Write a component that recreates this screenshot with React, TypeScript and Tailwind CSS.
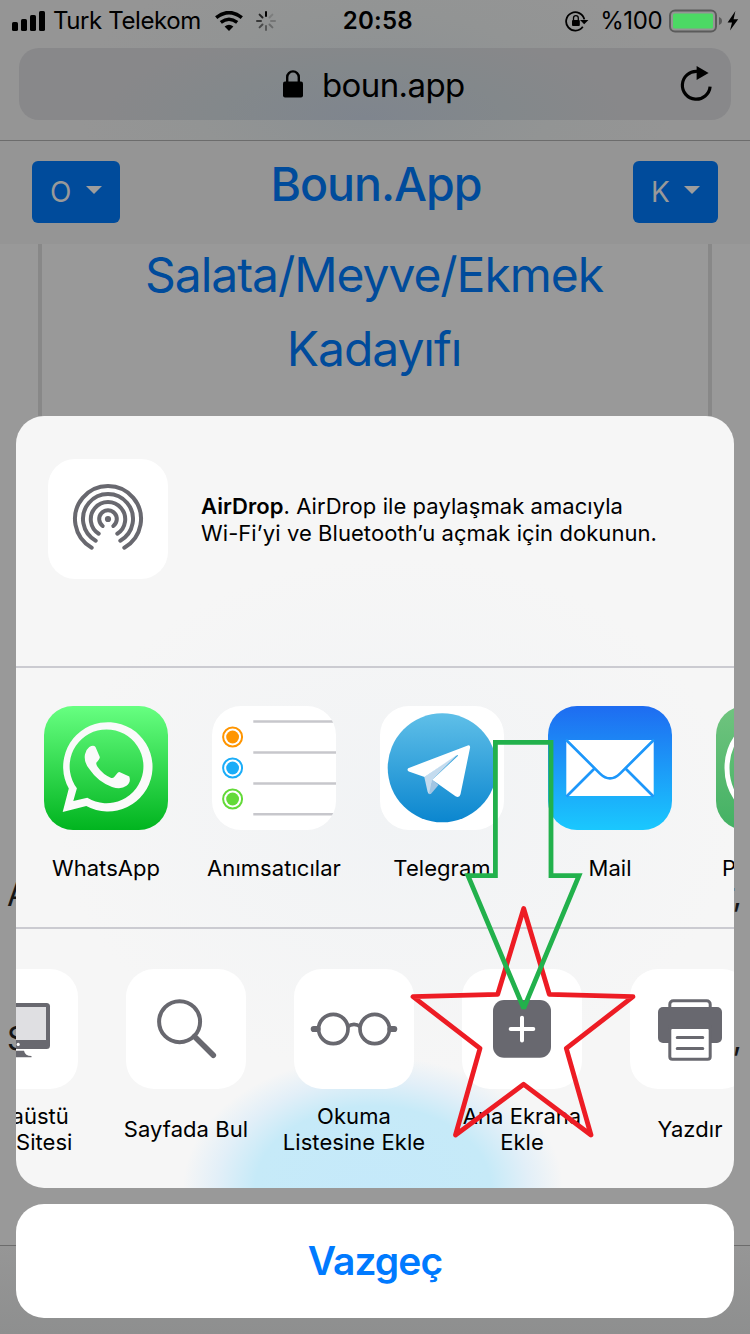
import type { ReactNode } from 'react';

const ink = '#68686f';

function StatusBar() {
  return (
    <div className="flex h-[41px] items-center pl-3 pr-[9px] text-black">
      <svg width="33" height="20" className="shrink-0">
        <rect x="0" y="11" width="6" height="9" rx="1.6" />
        <rect x="9" y="8" width="6" height="12" rx="1.6" />
        <rect x="18" y="4" width="6" height="16" rx="1.6" />
        <rect x="27" y="0" width="6" height="20" rx="1.6" />
      </svg>
      <span className="ml-[8px] w-[162px] whitespace-nowrap text-[24px] leading-[30px] tracking-[-0.4px]">Turk Telekom</span>
      <svg width="28" height="20" viewBox="0 0 28 20" className="shrink-0">
        <path d="M1.2 6.6Q14-3.4 26.8 6.6" fill="none" stroke="#000" strokeWidth="3.6" />
        <path d="M5.8 11.4Q14 5 22.2 11.4" fill="none" stroke="#000" strokeWidth="3.4" />
        <path d="M9.6 15.6Q14 12 18.4 15.6L14 20Z" />
      </svg>
      <svg width="20" height="20" viewBox="-10 -10 20 20" className="ml-[13px] shrink-0" stroke="#000" strokeWidth="2" strokeLinecap="round">
        <path d="M0-5V-9" />
        <path d="M3.5-3.5L6.4-6.4" opacity=".15" />
        <path d="M5 0H9" opacity=".2" />
        <path d="M3.5 3.5L6.4 6.4" opacity=".28" />
        <path d="M0 5V9" opacity=".4" />
        <path d="M-3.5 3.5L-6.4 6.4" opacity=".5" />
        <path d="M-5 0H-9" opacity=".62" />
        <path d="M-3.5-3.5L-6.4-6.4" opacity=".75" />
      </svg>
      <span className="ml-[67px] w-[223px] whitespace-nowrap text-[24px] font-semibold leading-[30px] tracking-[0.3px]">20:58</span>
      <svg width="24" height="22" viewBox="0 0 24 22" className="shrink-0">
        <path d="M17.8 16.8A9.2 9.2 0 1 1 19.3 9.4" fill="none" stroke="#000" strokeWidth="1.8" />
        <path d="M15 10H23.4L19.2 14.2Z" />
        <rect x="7" y="10" width="7.8" height="6" rx="1" />
        <path d="M8.5 10V8a2.4 2.4 0 0 1 4.8 0V10" fill="none" stroke="#000" strokeWidth="1.3" />
      </svg>
      <span className="ml-[11px] w-[69px] whitespace-nowrap text-[24px] leading-[30px] tracking-[-0.4px]">%100</span>
      <svg width="72" height="24" viewBox="0 0 72 24" className="shrink-0">
        <rect x="1" y="1.6" width="46" height="21" rx="5" fill="none" stroke="#5b5b5b" strokeWidth="2" />
        <rect x="4" y="4.6" width="40" height="15" rx="1.5" fill="#4cd964" />
        <path d="M50 8q3 1.2 3 4t-3 4z" fill="#5b5b5b" />
        <path d="M66.4 2L58.6 13.4H63L61 21.6L69.2 10.2H64.6Z" />
      </svg>
    </div>
  );
}

function AddressBar() {
  return (
    <div className="mx-[19px] mt-[7px] flex h-[72px] items-center rounded-[20px] bg-[#88888a] bg-[radial-gradient(ellipse_260px_90px_at_345px_70px,#7f858e,#83888b_55%,transparent)] text-black">
      <svg width="20" height="28" viewBox="0 0 20 28" className="ml-[264px]">
        <rect y="11.5" width="20" height="16" rx="2" />
        <path d="M4.2 12V7.2a5.8 5.8 0 0 1 11.6 0V12" fill="none" stroke="#000" strokeWidth="2.4" />
      </svg>
      <span className="ml-[19px] mt-px w-[358px] text-[33px] leading-[40px] tracking-[-0.6px]">boun.app</span>
      <svg width="34" height="38" viewBox="0 0 34 38" className="shrink-0">
        <path d="M17 6.4A13.9 13.9 0 1 0 30.1 21.6" fill="none" stroke="#000" strokeWidth="3.2" />
        <path d="M16.6 1L28.6 8L16.6 15Z" />
      </svg>
    </div>
  );
}

function MenuButton({ label, className }: { label: string; className: string }) {
  return (
    <div className={`flex h-[62px] items-center justify-between rounded-[6px] bg-[#004b9b] pl-[18px] pr-[18px] text-[28px] text-[#999] ${className}`}>
      <span>{label}</span>
      <svg width="16" height="8" className="mb-1">
        <path d="M0 0H16L8 8Z" fill="#9d9d9d" />
      </svg>
    </div>
  );
}

function Safari() {
  return (
    <div className="flex h-[1334px] flex-col bg-[#999]">
      <header className="h-[141px] shrink-0 border-b border-[#6c6c6c] bg-[#959595] bg-[radial-gradient(ellipse_300px_150px_at_375px_100px,#8b9093,#929494_60%,transparent)]">
        <StatusBar />
        <AddressBar />
      </header>
      <nav className="flex h-[103px] shrink-0 items-start justify-between bg-[#959595] px-8 pt-5">
        <MenuButton label="O" className="w-[88px]" />
        <h1 className="mr-[1px] mt-[-6px] text-[46.5px] font-medium leading-[58px] tracking-[-1px] text-[#004b9b]">Boun.App</h1>
        <MenuButton label="K" className="w-[85px]" />
      </nav>
      <section className="mx-[38px] h-[560px] shrink-0 border-x-4 border-[#888] pr-[2px] text-center text-[48px] leading-[74px] tracking-[-1.05px] text-[#004b9b]">
        <p className="mt-[-6px]">Salata/Meyve/Ekmek</p>
        <p>Kadayıfı</p>
      </section>
      <div className="h-[441px] shrink-0 pl-[7px] pr-2 pt-[71px] text-[32px] leading-[40px] text-[#151515]">
        <p className="flex justify-between"><span>A</span><span>r,</span></p>
        <p className="mt-[104px] flex justify-between"><span>S</span><span>,</span></p>
      </div>
      <footer className="h-[89px] shrink-0 border-t border-[#6c6c6c] bg-gradient-to-b from-[#969696] to-[#8e8f8f]" />
    </div>
  );
}

function AirDropIcon() {
  return (
    <svg viewBox="0 0 120 120" className="size-[120px] shrink-0 rounded-[27px] bg-white" fill="none" stroke={ink} strokeWidth="4" strokeLinecap="round">
      <circle cx="60" cy="60" r="3.1" fill={ink} stroke="none" />
      <path d="M54.7 67A8.8 8.8 0 1 1 65.3 67" />
      <path d="M50.7 74.7A17.2 17.2 0 1 1 69.3 74.7" />
      <path d="M47.7 81.7A25 25 0 1 1 72.3 81.7" />
      <path d="M43.7 88.7A33 33 0 1 1 76.3 88.7" />
    </svg>
  );
}

function WhatsAppIcon() {
  return (
    <svg viewBox="0 0 124 124">
      <defs>
        <linearGradient id="wa" x2="0" y2="1">
          <stop stopColor="#67ff81" />
          <stop offset="1" stopColor="#01b41f" />
        </linearGradient>
      </defs>
      <path fill="url(#wa)" d="M0 0H124V124H0Z" />
      <path fill="#fafafa" fillRule="evenodd" d="M18.7 106L24.8 82.6A44.7 44.7 0 1 1 42.3 100ZM29.3 95L43.3 91.8A36.9 36.9 0 1 0 32.9 82.3Z" />
      <path fill="#fafafa" d="M45.3 41Q49.5 38.6 51.5 41L55.8 51Q56 52.5 52.3 56.8Q52 58.5 53.5 60.8Q59 68.8 67.2 71.9Q69 72.3 70 71.2L73.5 67Q75 65.5 76.5 66.4L85.3 70.6Q87.2 76.5 82.5 79.7Q77 84 68 80.9Q54 76 45.5 63.3Q39.5 56 41 48.3Q42 43.5 45.3 41Z" />
    </svg>
  );
}

function RemindersIcon() {
  return (
    <svg viewBox="0 0 124 124">
      <path fill="#fff" d="M0 0H124V124H0Z" />
      <path d="M41.3 15.5H121M41.3 46.4H124M41.3 77.4H124M41.3 108.3H121" stroke="#c7c7cc" strokeWidth="2.5" />
      {[['#ff9500', 31], ['#1badf8', 62], ['#63da38', 93]].map(([c, y]) => (
        <g key={c}>
          <circle cx="20.6" cy={y} r="9.5" fill="none" stroke={c as string} strokeWidth="2" />
          <circle cx="20.6" cy={y} r="6.4" fill={c as string} />
        </g>
      ))}
    </svg>
  );
}

function TelegramIcon() {
  return (
    <svg viewBox="0 0 124 124">
      <defs>
        <linearGradient id="tg" x2="0" y2="1">
          <stop stopColor="#5fbfe8" />
          <stop offset="1" stopColor="#0b86cf" />
        </linearGradient>
      </defs>
      <path fill="#fff" d="M0 0H124V124H0Z" />
      <circle cx="62.2" cy="61.8" r="54.5" fill="url(#tg)" />
      <path fill="#c4dbee" d="M44.3 71L80 46L52.5 73.5L50 88.2Q48 88 47.5 85.5Z" />
      <path fill="#a2c5e3" d="M52.3 73.5L58.5 79L51.5 87.2Q50 88.8 49 87.6Z" />
      <path fill="#fff" fillRule="evenodd" d="M28.2 62.2L87.8 39.4Q90.6 38.7 90 42L80.5 88.3Q79.5 92.2 75.5 90.3L52.2 73.7L77.8 50Q78.6 48.3 76 49.6L44.5 71L28.8 65.6Q26.6 64 28.2 62.2Z" />
    </svg>
  );
}

function MailIcon() {
  return (
    <svg viewBox="0 0 124 124">
      <defs>
        <linearGradient id="ml" x2="0" y2="1">
          <stop stopColor="#1e6cf1" />
          <stop offset="1" stopColor="#1ac8fe" />
        </linearGradient>
      </defs>
      <path fill="url(#ml)" d="M0 0H124V124H0Z" />
      <rect x="18.3" y="34" width="87.4" height="56" rx="1.5" fill="#fff" />
      <path d="M18 33.8L52 67.6Q57 72.4 62 72.4T72 67.6L106 33.8M18.5 90.5L46 63M105.5 90.5L78 63" fill="none" stroke="#1d97fa" strokeWidth="2.7" />
    </svg>
  );
}

function PartialGreenIcon() {
  return (
    <svg viewBox="0 0 124 124">
      <defs>
        <linearGradient id="pg" x2="0" y2="1">
          <stop stopColor="#70c47f" />
          <stop offset="1" stopColor="#43b163" />
        </linearGradient>
      </defs>
      <path fill="url(#pg)" d="M0 0H124V124H0Z" />
      <circle cx="65" cy="62" r="54" fill="none" stroke="#fff" strokeWidth="5" />
    </svg>
  );
}

function DesktopIcon() {
  return (
    <svg viewBox="0 0 120 120">
      <rect x="28" y="34" width="64" height="46" rx="3.5" fill={ink} />
      <path d="M32 38H88V71H32Z" fill="#dfdfe2" />
      <circle cx="60.2" cy="75.4" r="1.6" fill="#fff" />
      <path d="M54 81.8H66Q67 87 73.5 87V88.2H46.5V87Q53 87 54 81.8Z" fill={ink} />
    </svg>
  );
}

function SearchIcon() {
  return (
    <svg viewBox="0 0 120 120" fill="none" stroke={ink}>
      <circle cx="53.6" cy="52.7" r="20.5" strokeWidth="4" />
      <path d="M68.5 67.5L87.3 86.3" strokeWidth="5.6" strokeLinecap="round" />
    </svg>
  );
}

function GlassesIcon() {
  return (
    <svg viewBox="0 0 120 120" fill="none" stroke={ink} strokeWidth="3.7">
      <circle cx="39.3" cy="60" r="14.7" />
      <circle cx="80.7" cy="60" r="14.7" />
      <path d="M53.5 57.6Q60 53.2 66.5 57.6" />
      <path d="M19.8 60H23.5M100.2 60H96.5" strokeWidth="6.2" strokeLinecap="round" />
    </svg>
  );
}

function AddIcon() {
  return (
    <svg viewBox="0 0 120 120">
      <rect x="31" y="31" width="58" height="57.8" rx="11" fill={ink} />
      <path d="M60 48.8V71.4M48.7 60.1H71.3" stroke="#fff" strokeWidth="4" strokeLinecap="round" />
    </svg>
  );
}

function PrinterIcon() {
  return (
    <svg viewBox="0 0 120 120" fill="none" stroke={ink} strokeWidth="3">
      <rect x="39.8" y="31.8" width="40.4" height="20" rx="3.5" />
      <rect x="28" y="38" width="64" height="36" rx="5" fill={ink} stroke="none" />
      <rect x="39.8" y="58.5" width="40.4" height="31.8" rx="2.5" fill="#fff" />
      <path d="M38.3 57.5H81.7" strokeWidth="2.4" />
      <path d="M47.2 68.4H72.8M47.2 79.4H72.8" strokeLinecap="round" />
    </svg>
  );
}

function AppItem({ icon, label }: { icon: ReactNode; label: ReactNode }) {
  return (
    <div className="flex w-[168px] shrink-0 flex-col items-center">
      <div className="size-[124px] overflow-hidden rounded-[29px]">{icon}</div>
      <div className="mt-[25px] whitespace-nowrap text-[22px] leading-[26px] tracking-[0.05px]">{label}</div>
    </div>
  );
}

function ActionItem({ icon, children }: { icon: ReactNode; children: ReactNode }) {
  return (
    <div className="flex w-[168px] shrink-0 flex-col items-center">
      <div className="size-[120px] overflow-hidden rounded-[28px] bg-white">{icon}</div>
      <div className="mt-[14px] flex h-[52px] flex-col justify-center whitespace-nowrap text-center text-[22px] leading-[26px] tracking-[0.05px]">
        {children}
      </div>
    </div>
  );
}

function ShareSheet() {
  return (
    <div className="absolute inset-0 flex flex-col justify-end gap-4 px-4 pb-4">
      <div className="h-[772px] overflow-hidden rounded-[28px] bg-[#f6f6f6] bg-[radial-gradient(ellipse_190px_132px_at_357px_772px,#c5e9fa_0%,#c6eaf8_62%,#e2eff8_82%,transparent_100%),radial-gradient(ellipse_340px_260px_at_380px_400px,#f1f3f5,transparent)] text-black">
        <section className="flex h-[252px] items-start border-b-2 border-[#cbcbd1] pl-8 pt-[43px]">
          <AirDropIcon />
          <p className="ml-[33px] mt-[34px] whitespace-nowrap text-[22px] leading-[27px] tracking-[0.06px]">
            <b className="font-semibold">AirDrop</b>. AirDrop ile paylaşmak amacıyla
            <br />
            Wi-Fi’yi ve Bluetooth’u açmak için dokunun.
          </p>
        </section>
        <section className="ml-[6px] flex h-[259px] pt-[38px]">
          <AppItem icon={<WhatsAppIcon />} label="WhatsApp" />
          <AppItem icon={<RemindersIcon />} label="Anımsatıcılar" />
          <AppItem icon={<TelegramIcon />} label="Telegram" />
          <AppItem icon={<MailIcon />} label="Mail" />
          <AppItem icon={<PartialGreenIcon />} label={<span className="block w-[112px]">P</span>} />
        </section>
        <section className="flex h-[261px] border-t-2 border-[#cbcbd1] pt-10">
          <div className="-ml-[82px] flex">
            <ActionItem icon={<DesktopIcon />}>
              <span className="w-[101px] text-right">Masaüstü</span>
              <span className="-mr-[4px] text-right">Sitesi</span>
            </ActionItem>
            <ActionItem icon={<SearchIcon />}>Sayfada Bul</ActionItem>
            <ActionItem icon={<GlassesIcon />}>
              <span>Okuma</span>
              <span>Listesine Ekle</span>
            </ActionItem>
            <ActionItem icon={<AddIcon />}>
              <span>Ana Ekrana</span>
              <span>Ekle</span>
            </ActionItem>
            <ActionItem icon={<PrinterIcon />}>Yazdır</ActionItem>
          </div>
        </section>
      </div>
      <button className="h-[114px] rounded-[28px] bg-white pt-px text-[39px] font-semibold tracking-[-0.9px] text-[#007aff]">Vazgeç</button>
    </div>
  );
}

function Annotations() {
  return (
    <svg width="750" height="1334" className="pointer-events-none absolute inset-0" fill="none" strokeWidth="4.8" strokeLinejoin="round">
      <path stroke="#ed1c24" d="M523.7 908.5L549.3 994.3L633 996.7L566.3 1048.3L591 1135L523.7 1084.3L455.5 1135L480 1048.3L413 996.7L497.7 994.3Z" />
      <path stroke="#22b14c" strokeLinejoin="miter" strokeMiterlimit="2" d="M495.4 742.4H551V875.7H579L523.7 1008.3L468 875.7H495.4Z" />
    </svg>
  );
}

export default function App() {
  return (
    <main className="relative h-[1334px] w-[750px] overflow-hidden font-['Inter','Liberation_Sans',sans-serif]">
      <Safari />
      <ShareSheet />
      <Annotations />
    </main>
  );
}
